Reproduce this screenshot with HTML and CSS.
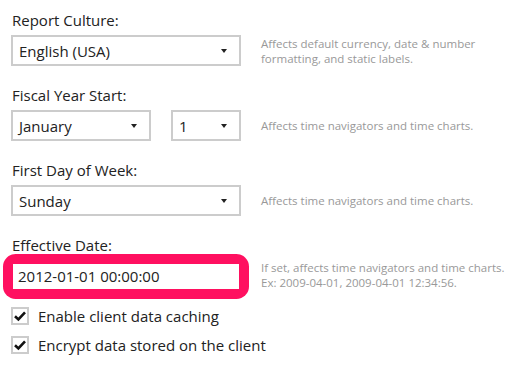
FILE: index.html
```html
<!DOCTYPE html>
<html>
  <head>
    <meta charset="utf-8">
    <title>Report Settings</title>
    <link rel="stylesheet" href="styles.css">
  </head>
  <body>
    <div class="settings">

      <div class="field">
        <div class="label">Report Culture:</div>
        <div class="row">
          <div class="controls">
            <div class="select wide">
              <span>English (USA)</span>
              <span class="arrow"></span>
            </div>
          </div>
          <div class="help">Affects default currency, date &amp; number<br>formatting, and static labels.</div>
        </div>
      </div>

      <div class="field">
        <div class="label">Fiscal Year Start:</div>
        <div class="row">
          <div class="controls">
            <div class="select month">
              <span>January</span>
              <span class="arrow"></span>
            </div>
            <div class="select day">
              <span>1</span>
              <span class="arrow"></span>
            </div>
          </div>
          <div class="help">Affects time navigators and time charts.</div>
        </div>
      </div>

      <div class="field">
        <div class="label">First Day of Week:</div>
        <div class="row">
          <div class="controls">
            <div class="select wide">
              <span>Sunday</span>
              <span class="arrow"></span>
            </div>
          </div>
          <div class="help">Affects time navigators and time charts.</div>
        </div>
      </div>

      <div class="field last">
        <div class="label">Effective Date:</div>
        <div class="row">
          <div class="controls">
            <div class="highlight">
              <div class="input">2012-01-01 00:00:00</div>
            </div>
          </div>
          <div class="help">If set, affects time navigators and time charts.<br>Ex: 2009-04-01, 2009-04-01 12:34:56.</div>
        </div>
      </div>

      <div class="checks">
        <label class="check">
          <span class="box">
            <svg width="14" height="14" viewBox="0 0 14 14"><path d="M2 7.2 L5.4 10.4 L12 3.4" fill="none" stroke="#111" stroke-width="2.6"/></svg>
          </span>
          Enable client data caching
        </label>
        <label class="check">
          <span class="box">
            <svg width="14" height="14" viewBox="0 0 14 14"><path d="M2 7.2 L5.4 10.4 L12 3.4" fill="none" stroke="#111" stroke-width="2.6"/></svg>
          </span>
          Encrypt data stored on the client
        </label>
      </div>

    </div>
  </body>
</html>
```

FILE: styles.css
```css
* {
  margin: 0;
  padding: 0;
  box-sizing: border-box;
}

body {
  background: #fff;
  color: #222;
  font-family: "Open Sans", "Noto Sans", sans-serif;
  font-size: 15px;
}

.settings {
  padding: 10px 0 0 11px;
}

.field {
  margin-bottom: 19px;
}

.field.last {
  margin-bottom: 10px;
}

.label {
  height: 20px;
  line-height: 20px;
  margin-left: 1px;
  margin-bottom: 5px;
  color: #222;
}

.last .label {
  margin-bottom: 7px;
}

.row {
  display: flex;
  align-items: center;
  gap: 20px;
}

.controls {
  display: flex;
  gap: 20px;
  width: 230px;
}

.select {
  display: flex;
  align-items: center;
  justify-content: space-between;
  height: 31px;
  border: 2px solid #ccc;
  padding: 0 12px 0 6px;
  font-size: 15px;
}

.wide {
  width: 230px;
}

.month {
  width: 140px;
}

.day {
  width: 70px;
}

.arrow {
  width: 0;
  height: 0;
  border-left: 3.5px solid transparent;
  border-right: 3.5px solid transparent;
  border-top: 4px solid #222;
}

.help {
  font-size: 11.5px;
  line-height: 15px;
  color: #999;
}

.last .help {
  margin-top: -3px;
}

.highlight {
  border-radius: 5px;
  box-shadow: 0 0 0 8px #ff1060;
  background: #ff1060;
}

.input {
  width: 230px;
  height: 29px;
  line-height: 25px;
  border: 2px solid #ff1060;
  background: #fff;
  padding: 0 5px;
  font-size: 15px;
}

.check {
  display: flex;
  align-items: center;
  gap: 9px;
  height: 29px;
  font-size: 15px;
}

.box {
  display: flex;
  align-items: center;
  justify-content: center;
  width: 18px;
  height: 18px;
  border: 2px solid #ccc;
}
```
